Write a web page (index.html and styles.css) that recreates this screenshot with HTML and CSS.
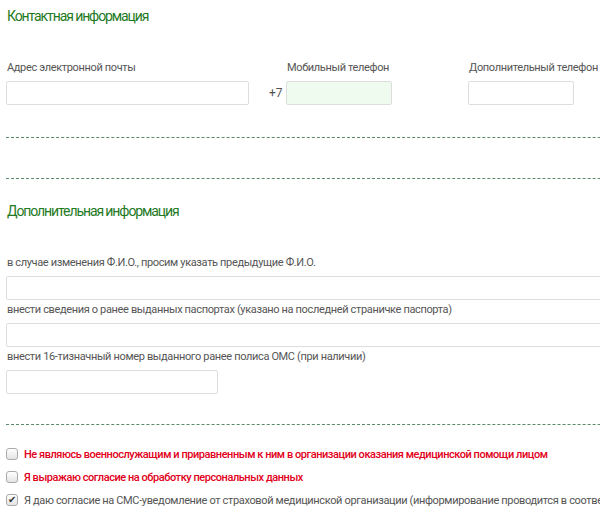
FILE: index.html
```html
<!DOCTYPE html>
<html lang="ru">
<head>
    <meta charset="UTF-8">
    <meta name="viewport" content="width=device-width, initial-scale=1.0">
    <title>Контактная информация</title>
    <link rel="stylesheet" href="styles.css">
</head>
<body>
    <div class="form">
        <h2 class="section-title">Контактная информация</h2>
        <div class="contact-row">
            <div class="field field-email">
                <label for="email">Адрес электронной почты</label>
                <input type="text" id="email">
            </div>
            <div class="field field-mobile">
                <label for="mobile">Мобильный телефон</label>
                <div class="phone">
                    <span class="phone-code">+7</span>
                    <input type="text" id="mobile" class="input-ok">
                </div>
            </div>
            <div class="field field-extra">
                <label for="phone2">Дополнительный телефон</label>
                <input type="text" id="phone2">
            </div>
        </div>

        <div class="divider divider-first"></div>
        <div class="divider divider-second"></div>

        <h2 class="section-title section-title-extra">Дополнительная информация</h2>
        <div class="extra-list">
            <div class="field">
                <label for="prev-fio">в случае изменения Ф.И.О., просим указать предыдущие Ф.И.О.</label>
                <input type="text" id="prev-fio" class="input-wide">
            </div>
            <div class="field">
                <label for="passports">внести сведения о ранее выданных паспортах (указано на последней страничке паспорта)</label>
                <input type="text" id="passports" class="input-wide">
            </div>
            <div class="field">
                <label for="oms">внести 16-тизначный номер выданного ранее полиса ОМС (при наличии)</label>
                <input type="text" id="oms" class="input-oms">
            </div>
        </div>

        <div class="divider divider-last"></div>

        <div class="checks">
            <label class="check check-warn">
                <input type="checkbox">
                <span class="box"></span>
                Не являюсь военнослужащим и приравненным к ним в организации оказания медицинской помощи лицом
            </label>
            <label class="check check-warn">
                <input type="checkbox">
                <span class="box"></span>
                Я выражаю согласие на обработку персональных данных
            </label>
            <label class="check">
                <input type="checkbox" checked>
                <span class="box">&#10004;</span>
                Я даю согласие на СМС-уведомление от страховой медицинской организации (информирование проводится в соответствии с законодательством)
            </label>
        </div>
    </div>
</body>
</html>
```

FILE: styles.css
```css
html, body {
    margin: 0;
    overflow: hidden;
}

body {
    font-family: Roboto, "Liberation Sans", sans-serif;
    font-size: 11px;
    letter-spacing: -0.35px;
    color: #555;
    background: #fff;
}

.form {
    width: 720px;
    padding: 6px 0 0 6px;
}

.section-title {
    margin: 0 0 0 1px;
    font-size: 14px;
    font-weight: normal;
    letter-spacing: -1.1px;
    line-height: 20px;
    color: #1f7a1f;
}

.contact-row {
    display: flex;
    margin-top: 35px;
}

.field label {
    display: block;
    margin: 0 0 6px 1px;
    line-height: 14px;
    white-space: nowrap;
}

input[type="text"] {
    display: block;
    box-sizing: border-box;
    height: 24px;
    margin: 0;
    padding: 2px 6px;
    border: 1px solid #ddd;
    border-radius: 2px;
    background: #fff;
    font: inherit;
}

.field-email {
    width: 243px;
}

.field-email input { width: 243px; }

.field-mobile {
    width: 124px;
    margin-left: 20px;
}

.field-mobile label {
    margin-left: 18px;
}

.phone {
    display: flex;
    align-items: center;
}

.phone-code {
    width: 17px;
    font-size: 12px;
    letter-spacing: 0;
}

.field-mobile input { width: 106px; }

.input-ok {
    background: #effbef !important;
}

.field-extra {
    margin-left: 75px;
}

.field-extra input { width: 106px; }

.divider {
    height: 0;
    border-top: 1px dashed #5b8a6a;
}

.divider-first {
    margin-top: 32px;
}

.divider-second {
    margin-top: 40px;
}

.section-title-extra {
    margin-top: 22px;
}

.extra-list {
    margin-top: 35px;
}

.extra-list .field + .field {
    margin-top: 3px;
}

.input-wide { width: 700px !important; }

.input-oms { width: 212px !important; }

.divider-last {
    margin-top: 30px;
}

.checks {
    margin-top: 17px;
}

.check {
    display: flex;
    align-items: center;
    height: 24px;
    white-space: nowrap;
}

.check + .check {
    margin-top: -1px;
}

.check input {
    display: none;
}

.check .box {
    box-sizing: border-box;
    flex: none;
    width: 12px;
    height: 12px;
    margin-right: 6px;
    border: 1px solid #aaa;
    border-radius: 3px;
    background: linear-gradient(#fff, #e4e4e4);
    font-size: 10px;
    line-height: 9px;
    text-align: center;
    letter-spacing: 0;
    color: #333;
}

.check-warn {
    color: #e2001a;
    font-weight: 500;
    letter-spacing: -0.45px;
}
```
